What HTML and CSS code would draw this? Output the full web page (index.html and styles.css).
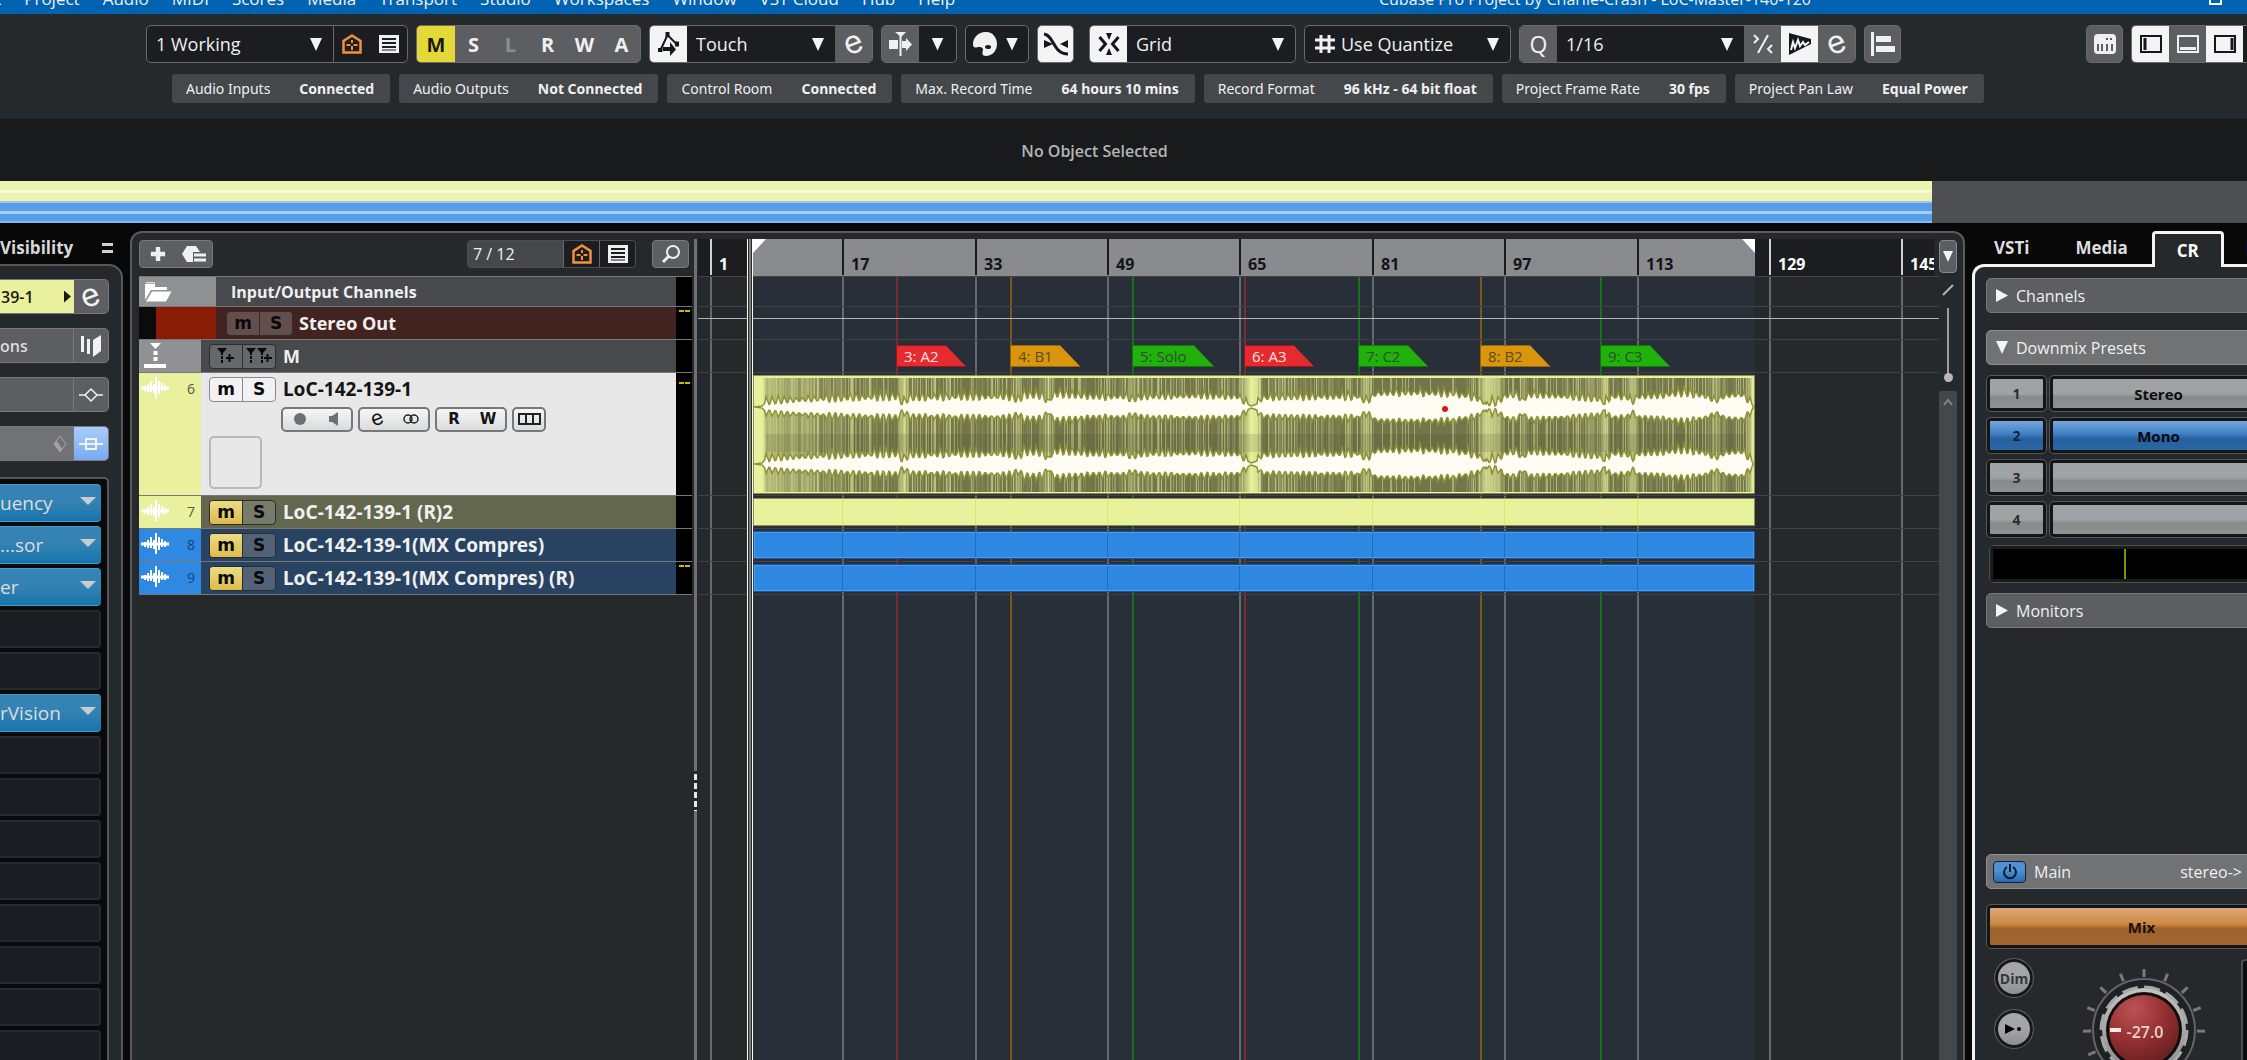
FILE: index.html
```html
<!DOCTYPE html>
<html lang="en">
<head>
    <meta charset="utf-8">
    <title>Cubase Pro Project by Charlie-Crash - LoC-Master-140-120</title>
    <link rel="stylesheet" href="styles.css">
</head>
<body>
    <!-- shared icons -->
    <svg class="defs" aria-hidden="true">
        <symbol id="i-home" viewBox="0 0 20 20"><path d="M1.500 18.500V7L10 1.500 18.500 7v11.500z" fill="none" stroke="currentColor" stroke-width="2.500"/><path d="M10 6v3M10 12v4M4.500 11h4M11.500 11h4" stroke="currentColor" stroke-width="2"/></symbol>
        <symbol id="i-list" viewBox="0 0 20 20"><path fill="currentColor" fill-rule="evenodd" d="M0 1h20v18H0zM3 4v2h14V4zM3 8v2h14V8zM3 12v2h14v-2zM3 15.500v1h14v-1z"/></symbol>
        <symbol id="i-wave" viewBox="0 0 28 22"><path fill="none" stroke="currentColor" stroke-width="2" d="M1 10v2M4 9v5M7 7v8M10 4v11M13 7v9M15 0v21M18 4v13M21 6v8M24 8v6M27 10v2"/><path d="M0 11h28" stroke="currentColor" stroke-width="3"/></symbol>
        <symbol id="i-auto" viewBox="0 0 22 24"><path d="M2.500 18L9.500 3l9 9" fill="none" stroke="currentColor" stroke-width="2"/><path fill="currentColor" d="M7.500 0h4v5h-4zM0 16h4.500v4H0zM17 9.500h4v5h-4zM5 15h7v-5l6 7.500-6 6.500v-5H5z"/></symbol>
        <symbol id="i-folder" viewBox="0 0 28 20"><path fill="currentColor" d="M1 2h10v3h12v3H7L1 18z"/><path fill="currentColor" d="M8 9.500h19.500L22 19.500H2z"/><path d="M2 .8h9" stroke="currentColor"/></symbol>
    </svg>

    <header class="titlebar">
        <nav class="menu">
            <button>Edit</button>
            <button>Project</button>
            <button>Audio</button>
            <button>MIDI</button>
            <button>Scores</button>
            <button>Media</button>
            <button>Transport</button>
            <button>Studio</button>
            <button>Workspaces</button>
            <button>Window</button>
            <button>VST Cloud</button>
            <button>Hub</button>
            <button>Help</button>
        </nav>
        <span class="title">Cubase Pro Project by Charlie-Crash - LoC-Master-140-120</span>
        <button class="restore" aria-label="Restore window"></button>
    </header>

    <div class="toolbar">
        <div class="group">
            <label class="pick working"><select aria-label="Workspace"><option>1 Working</option></select></label>
            <button class="cell edge orange" aria-label="Home"><svg width="20" height="20"><use href="#i-home"/></svg></button>
            <button class="cell" aria-label="List"><svg width="20" height="20"><use href="#i-list"/></svg></button>
        </div>
        <div class="group letters">
            <button class="cell mute">M</button>
            <button class="cell">S</button>
            <button class="cell dim">L</button>
            <button class="cell">R</button>
            <button class="cell">W</button>
            <button class="cell">A</button>
        </div>
        <div class="group">
            <button class="cell on" aria-label="Automation"><svg width="22" height="24"><use href="#i-auto"/></svg></button>
            <label class="pick touch"><select aria-label="Automation mode"><option>Touch</option></select></label>
            <button class="cell gray" aria-label="Automation panel"><span class="e">e</span></button>
        </div>
        <div class="group">
            <button class="cell gray" aria-label="Auto-scroll"><svg width="26" height="26" viewBox="0 0 26 26"><path fill="currentColor" d="M1 9h9v9H1zM14 10h4V7l6 6.500-6 6.500v-3h-4zM7 1h11l-5 5z"/><path d="M12.500 3v22" stroke="currentColor" stroke-width="2"/></svg></button>
            <button class="cell small-arrow" aria-label="Auto-scroll options"></button>
        </div>
        <div class="group">
            <button class="cell" aria-label="Colorize"><svg width="26" height="26" viewBox="0 0 26 26"><path fill="currentColor" fill-rule="evenodd" d="M13 1C20 0 25 6 25 13c0 7-5 12-11 12-4 0-4-3-3-6 0-3-2-3-5-3-3 1-5 1-5-3C1 6 7 1 13 1zM16 14a3 2 0 1 0 .1 4 3 2 0 1 0-.1-4z"/></svg></button>
            <button class="cell small-arrow narrow" aria-label="Color options"></button>
        </div>
        <button class="single on" aria-label="Snap to zero crossing"><svg width="26" height="24" viewBox="0 0 26 24"><path d="M1 2c10 1 9 20 24 20" fill="none" stroke="currentColor" stroke-width="3"/><path fill="currentColor" d="M1 8l9 4-9 4zM25 8l-8 4 8 4z"/></svg></button>
        <div class="group snap">
            <button class="cell on" aria-label="Snap"><svg width="22" height="24" viewBox="0 0 22 24"><path d="M1.500 5l6 7-6 7M20.500 5l-6 7 6 7" fill="none" stroke="currentColor" stroke-width="3"/><path fill="currentColor" d="M8 1h6l-3 7zM8 23h6l-3-7z"/></svg></button>
            <label class="pick grid"><select aria-label="Snap type"><option>Grid</option></select></label>
        </div>
        <div class="group">
            <span class="cell hash"><svg width="20" height="18" viewBox="0 0 20 18"><path d="M6 0v18M14 0v18M0 5h20M0 13h20" stroke="currentColor" stroke-width="3"/></svg></span>
            <label class="pick quantize"><select aria-label="Grid type"><option>Use Quantize</option></select></label>
        </div>
        <div class="group">
            <button class="cell gray q">Q</button>
            <label class="pick sixteenth"><select aria-label="Quantize preset"><option>1/16</option></select></label>
            <button class="cell gray" aria-label="Iterative quantize"><svg width="20" height="22" viewBox="0 0 20 22"><path d="M1 2l4 4-4 4M19 12l-4 4 4 4M15 2L5 20" fill="none" stroke="currentColor" stroke-width="2"/></svg></button>
            <button class="cell on" aria-label="Audio warp quantize"><svg width="24" height="22" viewBox="0 0 24 22"><path fill="currentColor" d="M1 0l22 6v5L1 22z"/><path d="M3 17l2-8 2 6 3-8 2 6 3-4 2 3 4-3" fill="none" stroke="#f4f4f4" stroke-width="2"/></svg></button>
            <button class="cell gray" aria-label="Quantize panel"><span class="e">e</span></button>
        </div>
        <button class="single gray" aria-label="Align"><svg width="24" height="24" viewBox="0 0 24 24"><path d="M1.500 0v24" stroke="currentColor" stroke-width="3"/><path fill="currentColor" d="M5 4h15v6H5zM5 14h19v6H5z"/></svg></button>

        <button class="single gray to-right" aria-label="Set up toolbar"><svg width="22" height="20" viewBox="0 0 22 20"><rect width="22" height="20" rx="4" fill="currentColor"/><path d="M4 10v7M8 10v7M13 10v7M18 10v7" stroke="#5d5e61" stroke-width="2"/><path d="M12 5h2M16 5h2" stroke="#5d5e61" stroke-width="2"/></svg></button>
        <div class="group zones">
            <button class="cell on" aria-label="Left zone"><svg width="22" height="18" viewBox="0 0 22 18"><rect x="1" y="1" width="20" height="16" fill="none" stroke="currentColor" stroke-width="2"/><path d="M5 3v12" stroke="currentColor" stroke-width="3"/></svg></button>
            <button class="cell gray" aria-label="Lower zone"><svg width="22" height="18" viewBox="0 0 22 18"><rect x="1" y="1" width="20" height="16" fill="none" stroke="currentColor" stroke-width="2"/><path d="M3 13.500h16" stroke="currentColor" stroke-width="3"/></svg></button>
            <button class="cell on" aria-label="Right zone"><svg width="22" height="18" viewBox="0 0 22 18"><rect x="1" y="1" width="20" height="16" fill="none" stroke="currentColor" stroke-width="2"/><path d="M18 3v12" stroke="currentColor" stroke-width="3"/></svg></button>
        </div>
    </div>

    <div class="status">
        <div class="stat">Audio Inputs <b>Connected</b></div>
        <div class="stat">Audio Outputs <b>Not Connected</b></div>
        <div class="stat">Control Room <b>Connected</b></div>
        <div class="stat">Max. Record Time <b>64 hours 10 mins</b></div>
        <div class="stat">Record Format <b>96 kHz - 64 bit float</b></div>
        <div class="stat">Project Frame Rate <b>30 fps</b></div>
        <div class="stat">Project Pan Law <b>Equal Power</b></div>
    </div>

    <div class="info">No Object Selected</div>
    <div class="overview"><div class="overview-used"></div></div>

    <main class="workspace">
        <aside class="left">
            <div class="left-tabs"><span>Visibility</span><i class="bars"></i></div>
            <div class="left-panel">
                <div class="insp yellow"><span class="channel">39-1</span><i class="tri-right"></i><button class="insp-btn" aria-label="Edit channel"><span class="e">e</span></button></div>
                <div class="insp"><span>ons</span><button class="insp-btn" aria-label="Expression"><svg width="20" height="22" viewBox="0 0 20 22"><path d="M1.500 1v16M7.500 4v15" stroke="currentColor" stroke-width="3"/><path fill="currentColor" d="M12 5l8-5v16l-8 6z"/></svg></button></div>
                <div class="insp"><button class="insp-btn" aria-label="Equalizer"><svg width="24" height="16" viewBox="0 0 24 16"><path d="M0 8h6M18 8h6M6 8l6-6 6 6-6 6z" fill="none" stroke="currentColor" stroke-width="1.500"/></svg></button></div>
                <div class="insp lit"><svg width="14" height="18" viewBox="0 0 14 18"><path d="M7 1l6 8-6 8-6-8z" fill="none" stroke="#a3a4a6" stroke-width="1"/><path d="M1 9l3-3 5 8-2 3z" fill="#a3a4a6"/></svg><button class="insp-btn" aria-label="Inserts"><svg width="24" height="14" viewBox="0 0 24 14"><path d="M0 7h24M7 2h10v10H7z" fill="none" stroke="currentColor" stroke-width="2"/></svg></button></div>
                <div class="rack">
                    <button class="slot used">uency</button>
                    <button class="slot used">...sor</button>
                    <button class="slot used">er</button>
                    <button class="slot" aria-label="Insert 4"></button>
                    <button class="slot" aria-label="Insert 5"></button>
                    <button class="slot used">rVision</button>
                    <button class="slot" aria-label="Insert 7"></button>
                    <button class="slot" aria-label="Insert 8"></button>
                    <button class="slot" aria-label="Insert 9"></button>
                    <button class="slot" aria-label="Insert 10"></button>
                    <button class="slot" aria-label="Insert 11"></button>
                    <button class="slot" aria-label="Insert 12"></button>
                    <button class="slot" aria-label="Insert 13"></button>
                    <button class="slot" aria-label="Insert 14"></button>
                </div>
            </div>
        </aside>

        <section class="arrange">
            <div class="tracks">
                <div class="tracks-head">
                    <div class="add">
                        <button aria-label="Add track"><svg width="16" height="16" viewBox="0 0 18 18"><path d="M9 1v16M1 9h16" stroke="currentColor" stroke-width="5"/></svg></button>
                        <button aria-label="Use track preset"><svg width="24" height="18" viewBox="0 0 24 18"><path fill="currentColor" d="M5 1h9l4 6h-7v10H5L0 9z"/><path d="M12 10h12M12 15h12" stroke="currentColor" stroke-width="3"/></svg></button>
                    </div>
                    <div class="count"><span>7 / 12</span>
                        <button class="orange" aria-label="Visible tracks"><svg width="22" height="20"><use href="#i-home"/></svg></button>
                        <button aria-label="Track list"><svg width="20" height="20"><use href="#i-list"/></svg></button>
                    </div>
                    <button class="find" aria-label="Find tracks"><svg width="20" height="20" viewBox="0 0 20 20"><circle cx="12" cy="8" r="6" fill="none" stroke="currentColor" stroke-width="2"/><path d="M8 12l-6 6" stroke="currentColor" stroke-width="3"/></svg></button>
                </div>
                <div class="track folder">
                    <div class="tag wide"><svg width="28" height="20"><use href="#i-folder"/></svg></div>
                    <div class="track-body">Input/Output Channels</div>
                    <div class="meter"></div>
                </div>
                <div class="track out">
                    <div class="tag wide"></div>
                    <div class="track-body"><div class="ms"><button>m</button><button>S</button></div><span class="name">Stereo Out</span></div>
                    <div class="meter"><i></i><i></i></div>
                </div>
                <div class="track marker-track">
                    <div class="tag"><svg width="22" height="26" viewBox="0 0 22 26"><path fill="currentColor" d="M6 0h11l-5.500 6zM0 21h22v4H0zM9.500 8h4v4h-4zM9.500 14h4v4h-4z"/></svg></div>
                    <div class="track-body">
                        <div class="ms icons">
                            <button aria-label="Add marker"><svg width="18" height="16" viewBox="0 0 18 16"><path fill="currentColor" d="M0 0h10L6 5H4z"/><path d="M5 4v11" stroke="currentColor" stroke-width="2" stroke-dasharray="3 1"/><path d="M12.500 6v8M9 10h8" stroke="currentColor" stroke-width="2"/></svg></button>
                            <button aria-label="Add cycle marker"><svg width="26" height="16" viewBox="0 0 26 16"><path fill="currentColor" d="M0 0h10L6 5H4zM11 0h10l-4 5h-2z"/><path d="M5 4v11M16 4v11" stroke="currentColor" stroke-width="2" stroke-dasharray="3 1"/><path d="M21.500 6v8M18 10h8" stroke="currentColor" stroke-width="2"/></svg></button>
                        </div>
                        <span class="name">M</span>
                    </div>
                    <div class="meter"></div>
                </div>
                <div class="track selected yellow-track">
                    <div class="tag"><svg width="28" height="22"><use href="#i-wave"/></svg><span>6</span></div>
                    <div class="track-body">
                        <div class="line"><div class="ms"><button>m</button><button>S</button></div><span class="name audio-name">LoC-142-139-1</span></div>
                        <div class="line controls">
                            <div class="pair"><button aria-label="Record enable"><svg width="12" height="12"><circle cx="6" cy="6" r="6" fill="#6f7072"/></svg></button><button aria-label="Monitor"><svg width="10" height="14"><path d="M0 4h3l6-4v14l-6-4H0z" fill="#6f7072"/></svg></button></div>
                            <div class="pair"><button aria-label="Edit channel settings"><span class="e small">e</span></button><button aria-label="Stereo"><svg width="16" height="10" viewBox="0 0 16 10"><circle cx="5" cy="5" r="4" fill="none" stroke="#222" stroke-width="1.500"/><circle cx="11" cy="5" r="4" fill="none" stroke="#222" stroke-width="1.500"/></svg></button></div>
                            <div class="pair"><button>R</button><button>W</button></div>
                            <div class="pair one"><button aria-label="Lanes"><svg width="23" height="12" viewBox="0 0 23 12"><path d="M1 1h21v10H1zM8 1v10M15 1v10" fill="none" stroke="#222" stroke-width="2"/></svg></button></div>
                        </div>
                        <div class="picture"></div>
                    </div>
                    <div class="meter"><i></i><i></i></div>
                </div>
                <div class="track olive yellow-track">
                    <div class="tag"><svg width="28" height="22"><use href="#i-wave"/></svg><span>7</span></div>
                    <div class="track-body"><div class="ms muted"><button>m</button><button>S</button></div><span class="name audio-name">LoC-142-139-1 (R)2</span></div>
                    <div class="meter"></div>
                </div>
                <div class="track blue-track">
                    <div class="tag"><svg width="28" height="22"><use href="#i-wave"/></svg><span>8</span></div>
                    <div class="track-body"><div class="ms muted"><button>m</button><button>S</button></div><span class="name audio-name">LoC-142-139-1(MX Compres)</span></div>
                    <div class="meter"></div>
                </div>
                <div class="track blue-track">
                    <div class="tag"><svg width="28" height="22"><use href="#i-wave"/></svg><span>9</span></div>
                    <div class="track-body"><div class="ms muted"><button>m</button><button>S</button></div><span class="name audio-name">LoC-142-139-1(MX Compres) (R)</span></div>
                    <div class="meter"><i></i><i></i></div>
                </div>
                <div class="tracks-end"></div>
            </div>

            <div class="splitter"><i></i></div>

            <div class="timeline" id="timeline">
                <div class="ruler" id="ruler"><div class="ruler-cycle"></div></div>
                <div class="lanes" id="lanes">
                    <div class="cycle"></div>
                    <div class="lane short"></div>
                    <div class="lane automation"></div>
                    <div class="lane" id="marker-lane"></div>
                    <div class="lane tall"><div class="clip audio"><canvas id="wave" width="1000" height="114"></canvas></div></div>
                    <div class="lane"><div class="clip yellow-clip"></div></div>
                    <div class="lane"><div class="clip blue-clip"></div></div>
                    <div class="lane"><div class="clip blue-clip"></div></div>
                    <div class="lane-end"></div>
                </div>
                <div class="playhead"></div>
            </div>

            <div class="scroller">
                <button class="ruler-menu" aria-label="Ruler menu"></button>
                <svg width="12" height="12" viewBox="0 0 12 12"><path d="M1 11L11 1" stroke="#b5b5b5" stroke-width="2"/></svg>
                <input class="zoom" type="range" min="0" max="100" value="100" aria-label="Waveform zoom">
                <div class="bar"><svg width="10" height="8" viewBox="0 0 10 8"><path d="M1 7l4-5 4 5" fill="none" stroke="#85878a" stroke-width="2"/></svg></div>
            </div>
        </section>

        <aside class="right">
            <div class="tabs">
                <button>VSTi</button>
                <button>Media</button>
                <button class="active">CR</button>
                <button>Meter</button>
            </div>
            <div class="right-panel">
                <button class="section"><i class="tri-right"></i>Channels</button>
                <button class="section open"><i class="tri-down"></i>Downmix Presets</button>
                <div class="presets">
                    <button>1</button><button class="preset">Stereo</button>
                    <button class="blue">2</button><button class="preset blue">Mono</button>
                    <button>3</button><button class="preset" aria-label="Preset 3"></button>
                    <button>4</button><button class="preset" aria-label="Preset 4"></button>
                </div>
                <div class="phase"><i></i></div>
                <button class="section"><i class="tri-right"></i>Monitors</button>

                <div class="section open main-out">
                    <button class="power" aria-label="Power"><svg width="16" height="16" viewBox="0 0 16 16"><path d="M5 3a6 6 0 1 0 6 0M8 0v8" fill="none" stroke="#0c1c30" stroke-width="2"/></svg></button>
                    <span>Main</span><span class="route">stereo-&gt;</span>
                </div>
                <button class="mix">Mix</button>
                <div class="level">
                    <div class="round-col">
                        <button class="round">Dim</button>
                        <button class="round" aria-label="Talk"><svg width="18" height="10" viewBox="0 0 18 10"><path d="M0 0l10 5-10 5z"/><circle cx="14" cy="5" r="2"/></svg></button>
                        <button class="round" aria-label="Listen"></button>
                    </div>
                    <svg class="knob" width="124" height="124" viewBox="-62 -62 124 124">
                        <defs>
                            <radialGradient id="red" cx=".35" cy=".2" r=".9"><stop offset="0" stop-color="#b95355"/><stop offset=".5" stop-color="#963031"/><stop offset="1" stop-color="#5f1c1e"/></radialGradient>
                            <linearGradient id="rim" x1="0" y1="0" x2="0" y2="1"><stop offset="0" stop-color="#c4c4c4"/><stop offset="1" stop-color="#8a8a8a"/></linearGradient>
                        </defs>
                        <g id="ticks"></g>
                        <circle r="51" fill="#1f2224" stroke="#626466" stroke-width="2"/>
                        <circle r="42" fill="url(#rim)"/>
                        <circle r="43" fill="none" stroke="#a9a9a9" stroke-width="3" stroke-dasharray="16 6.500"/>
                        <circle r="38" fill="#0d0d0e"/>
                        <circle r="35" fill="url(#red)"/>
                        <rect x="-34" y="-2" width="11" height="4" fill="#eee"/>
                        <text x="1" y="8" text-anchor="middle">-27.0</text>
                    </svg>
                    <div class="level-meter"></div>
                </div>
            </div>
        </aside>
    </main>
    <script src="script.js"></script>
</body>
</html>
```
FILE: styles.css
```css
* {
    box-sizing: border-box;
}

body {
    margin: 0;
    height: 100vh;
    overflow: hidden;
    display: flex;
    flex-direction: column;
    background: #080808;
    color: #f0f0f0;
    font-family: "Open Sans", "Noto Sans", sans-serif;
    font-size: 16px;
}

button, select, input {
    font: inherit;
    color: inherit;
    border: 0;
    padding: 0;
    margin: 0;
    background: none;
}

svg {
    display: block;
    flex: none;
}

.defs {
    position: absolute;
    width: 0;
    height: 0;
}

/* title bar */
.titlebar {
    height: 14px;
    flex: none;
    display: flex;
    align-items: flex-end;
    padding: 0 25px 3px 0;
    overflow: hidden;
    background: #0063b1;
    line-height: 24px;
    white-space: nowrap;
}

.menu {
    display: flex;
    gap: 23px;
    margin-left: -29px;
    font-size: 17px;
}

.title {
    margin-left: auto;
    margin-right: 398px;
}

.restore {
    width: 13px;
    height: 12px;
    margin-bottom: 6px;
    border: 2px solid #fff;
}

/* toolbar */
.toolbar {
    flex: none;
    display: flex;
    gap: 8px;
    padding: 11px 0 0 146px;
    background: #25292c;
}

.group, .single {
    display: flex;
    height: 38px;
    flex: none;
    border: 1px solid #696a6d;
    border-radius: 5px;
    background: #1c1d20;
    overflow: hidden;
}

.cell, .single {
    width: 37px;
    flex: none;
    display: flex;
    align-items: center;
    justify-content: center;
    color: #f0f0f0;
}

.edge {
    border-left: 1px solid #696a6d;
}

.cell.orange, .orange {
    color: #f0923a;
}

.single.gray, .gray {
    background: #5d5e61;
}

.single.on, .cell.on {
    background: #f4f4f4;
    color: #16171a;
}

.letters {
    background: #5d5e61;
    font-size: 20px;
    font-weight: 700;
}

.letters .mute {
    width: 38px;
    background: #e5d839;
    color: #1a1a10;
}

.letters .dim {
    color: #8b8c8f;
}

/* slanted "edit" letter */
.e {
    font-family: Inter, sans-serif;
    font-weight: 400;
    font-size: 32px;
    line-height: 24px;
    height: 28px;
    transform: rotate(-20deg);
}

.e.small {
    font-size: 21px;
    line-height: 18px;
    height: 20px;
}

.pick {
    position: relative;
    display: block;
}

.pick select {
    width: 100%;
    height: 36px;
    padding: 0 30px 0 9px;
    appearance: none;
    font-size: 18px;
}

.pick::after, .small-arrow::after, .ruler-menu::after {
    content: "";
    width: 12px;
    height: 13px;
    background: #f4f4f4;
    clip-path: polygon(0 0, 100% 0, 50% 100%);
}

.pick::after {
    position: absolute;
    right: 11px;
    top: 12px;
    pointer-events: none;
}

.working { width: 186px; }
.touch { width: 148px; }
.grid { width: 168px; }
.quantize { width: 171px; }
.sixteenth { width: 187px; }

.quantize select {
    padding-left: 2px;
}

.hash {
    width: 34px;
    justify-content: flex-end;
    padding-right: 4px;
}

.narrow {
    width: 25px;
    justify-content: flex-start;
    padding-left: 3px;
}

.snap {
    margin-left: 7px;
}

.q {
    font-size: 23px;
}

.to-right {
    margin-left: auto;
}

.zones {
    width: 116px;
    border-right: 0;
    border-radius: 5px 0 0 5px;
}

/* status line */
.status {
    flex: none;
    display: flex;
    gap: 9px;
    padding: 11px 0 16px 172px;
    background: #25292c;
}

.stat {
    height: 29px;
    padding: 0 16px 0 14px;
    display: flex;
    gap: 29px;
    border-radius: 3px;
    background: #44484b;
    font-family: "Noto Sans", sans-serif;
    font-size: 14px;
    line-height: 29px;
    white-space: nowrap;
}

.stat b {
    font-weight: 700;
}

.info {
    flex: none;
    height: 62px;
    line-height: 64px;
    padding-right: 58px;
    background: #191a1c;
    color: #b4b5b7;
    font-weight: 600;
    text-align: center;
}

.overview {
    flex: none;
    height: 42px;
    background: #4e4f53;
}

.overview-used {
    width: 86%;
    height: 42px;
    background: linear-gradient(#ecf3af 9px, #f6f8d8 9px 12px, #ecf3af 12px 20px, #9fc5ee 20px 22px, #559ee9 22px 30px, #a9cdf4 30px 33px, #559ee9 33px 40px, #86b9ee 40px);
}

.workspace {
    flex: 1;
    min-height: 0;
    display: grid;
    grid-template-columns: 123px 1fr 275px;
    gap: 7px;
    padding-top: 8px;
}

/* inspector */
.left, .right {
    display: flex;
    flex-direction: column;
    min-height: 0;
    overflow: hidden;
}

.left-tabs {
    height: 33px;
    flex: none;
    display: flex;
    align-items: center;
    justify-content: flex-end;
    gap: 29px;
    padding-right: 10px;
    font-size: 17px;
    font-weight: 700;
    color: #d8d8d8;
}

.bars {
    width: 12px;
    height: 10px;
    border-top: 3px solid #d0d0d0;
    border-bottom: 3px solid #d0d0d0;
}

.left-panel {
    flex: 1;
    min-height: 0;
    padding: 13px 12px 0 0;
    border: 2px solid #55585b;
    border-width: 2px 2px 0 0;
    border-radius: 0 14px 0 0;
    background: #25292c;
    overflow: hidden;
}

.insp {
    height: 35px;
    margin-bottom: 14px;
    display: flex;
    align-items: center;
    border: 1px solid #77787b;
    border-left: 0;
    border-radius: 0 5px 5px 0;
    background: #5d5e61;
    overflow: hidden;
    font-weight: 600;
    color: #dcdcdc;
}

.insp.yellow {
    background: linear-gradient(90deg, #e9f19e 74px, #5d5e61 74px);
    color: #1b1b12;
}

.channel {
    padding-left: 1px;
    width: 64px;
}

.insp.lit {
    background: #717274;
}

.insp.lit > svg {
    margin-left: 53px;
}

.insp-btn {
    width: 35px;
    height: 33px;
    margin-left: auto;
    display: flex;
    align-items: center;
    justify-content: center;
    border-left: 1px solid #77787b;
    color: #f2f2f2;
}

.yellow .insp-btn {
    border-left: 0;
}

.lit .insp-btn {
    background: linear-gradient(#a9cdfb, #78aaf0);
}

.tri-right {
    width: 7px;
    height: 12px;
    background: currentColor;
    clip-path: polygon(0 0, 100% 50%, 0 100%);
}

.rack {
    height: 700px;
    margin: 16px 0 0;
    padding: 5px 6px 0 0;
    border: 2px solid #55585b;
    border-width: 2px 2px 0 0;
    border-radius: 0 5px 0 0;
    background: #080a0b;
    display: flex;
    flex-direction: column;
    gap: 4px;
}

.slot {
    position: relative;
    height: 38px;
    flex: none;
    border: 2px solid #262a30;
    border-left: 0;
    border-radius: 0 4px 4px 0;
    background: #1a1d21;
    text-align: left;
    font-size: 19px;
    color: #dcdcdc;
}

.slot.used {
    border: 0;
    border-top: 1px solid #459bcc;
    border-bottom: 1px solid #459bcc;
    background: linear-gradient(#3583b4 45%, #1674ac);
}

.slot.used::after {
    content: "";
    position: absolute;
    right: 5px;
    top: 12px;
    width: 16px;
    height: 8px;
    background: #c9cdd0;
    clip-path: polygon(0 0, 100% 0, 50% 100%);
}

/* arrange window */
.arrange {
    min-width: 0;
    min-height: 0;
    display: flex;
    padding: 6px 6px 0 7px;
    border: 2px solid #5a5b5e;
    border-bottom: 0;
    border-radius: 12px 12px 0 0;
    background: #25292c;
}

.tracks {
    width: 553px;
    flex: none;
    overflow: hidden;
}

.tracks-head {
    height: 37px;
    display: flex;
    align-items: flex-start;
    padding-top: 1px;
}

.tracks-head button {
    display: flex;
    align-items: center;
    justify-content: center;
    height: 26px;
    width: 36px;
}

.add, .find {
    display: flex;
    border: 1px solid #77787b;
    border-radius: 4px;
    background: #5d5e61;
}

.tracks-head .find {
    width: 37px;
    height: 28px;
    margin: 0 3px 0 16px;
    border: 1px solid #77787b;
    background: #5d5e61;
}

.count {
    margin-left: auto;
    display: flex;
    width: 169px;
    border: 1px solid #4b4e51;
    border-radius: 4px;
    background: #44484b;
    overflow: hidden;
    font-size: 16px;
    line-height: 26px;
}

.count span {
    flex: 1;
    padding-left: 5px;
}

.count button {
    background: #1c1d20;
    border-left: 1px solid #696a6d;
}

.track {
    height: 33px;
    display: flex;
    border-top: 1px solid #77787b;
    background: #48494c;
}

.tag {
    width: 62px;
    flex: none;
    display: flex;
    align-items: flex-start;
    justify-content: space-between;
    padding: 4px 6px 0 2px;
    background: #909193;
    color: #fff;
}

.tag.wide {
    width: 77px;
    padding: 5px 0 0 5px;
}

.marker-track .tag {
    padding: 3px 0 0 5px;
}

.tag span {
    font-size: 14px;
    line-height: 24px;
    color: #55584a;
}

.blue-track .tag span {
    color: #1c4270;
}

.track-body {
    flex: 1;
    min-width: 0;
    display: flex;
    align-items: center;
    gap: 7px;
    padding-left: 8px;
    font-weight: 700;
    white-space: nowrap;
}

.name {
    font-size: 18px;
}

.audio-name {
    font-family: "Noto Sans", sans-serif;
    font-size: 19px;
}

.meter {
    width: 16px;
    flex: none;
    display: flex;
    gap: 1px;
    padding: 3px 0 0 3px;
    background: #000;
}

.meter i {
    width: 5px;
    height: 2px;
    background: #c9be00;
}

.folder {
    height: 30px;
}

.folder .track-body {
    padding-left: 15px;
}

.out {
    background: #43231f;
}

.out .tag {
    background: linear-gradient(90deg, #0b0b0b 17px, #8a1c05 17px);
}

.out .track-body {
    padding-left: 10px;
    gap: 6px;
}

.yellow-track .tag {
    background: #e9f19e;
}

.olive {
    background: #62674d;
}

.blue-track {
    background: #284361;
}

.blue-track .tag {
    background: #2f89e3;
}

.ms {
    display: flex;
    width: 67px;
    height: 25px;
    flex: none;
    border: 1px solid #2c2d2f;
    border-radius: 4px;
    background: rgba(160, 160, 160, .35);
    overflow: hidden;
}

.ms button {
    flex: 1;
    display: flex;
    align-items: center;
    justify-content: center;
    font: 700 17px/21px "DejaVu Sans", sans-serif;
    color: #0a0a0a;
}

.ms button + button {
    border-left: 1px solid #2c2d2f;
}

.ms.muted button:first-child {
    background: linear-gradient(#eddc85, #dcbb4c);
}

.selected {
    height: 123px;
    background: #e8e8e8;
}

.selected .track-body {
    flex-direction: column;
    align-items: flex-start;
    gap: 4px;
    padding-top: 3px;
}

.selected .name {
    color: #141414;
}

.selected .ms {
    border-color: #8a8a8a;
    background: #f2f2f2;
}

.selected .ms button + button {
    border-color: #8a8a8a;
}

.selected .meter {
    padding-top: 9px;
}

.line {
    display: flex;
    align-items: center;
    gap: 7px;
    height: 26px;
}

.controls {
    gap: 5px;
    padding-left: 72px;
}

.pair {
    width: 72px;
    height: 25px;
    display: flex;
    border: 2px solid #77787b;
    border-radius: 5px;
    background: linear-gradient(#f6f6f6, #dadbdd);
}

.pair.one {
    width: 34px;
}

.pair button {
    flex: 1;
    display: flex;
    align-items: center;
    justify-content: center;
    font: 700 15px/20px "DejaVu Sans", sans-serif;
    color: #141414;
}

.picture {
    width: 53px;
    height: 53px;
    flex: none;
    border: 2px solid #b8b8b8;
    border-radius: 5px;
}

.tracks-end {
    border-top: 1px solid #77787b;
}

.splitter {
    width: 3px;
    flex: none;
    margin: 0 1px 0 2px;
    background: #6f7073;
    position: relative;
}

.splitter i {
    position: absolute;
    left: 0;
    top: 532px;
    width: 3px;
    height: 40px;
    background: repeating-linear-gradient(#25292c 0 3px, #e8e8e8 3px 9px);
}

/* timeline */
.timeline {
    position: relative;
    flex: 1;
    min-width: 0;
    display: flex;
    flex-direction: column;
    overflow: hidden;
}

.ruler {
    position: relative;
    height: 38px;
    flex: none;
    margin-right: 5px;
    overflow: hidden;
    background: #1c1d20;
    font-weight: 700;
    line-height: 20px;
}

.ruler-cycle {
    position: absolute;
    left: 55px;
    top: 0;
    width: 1002px;
    height: 38px;
    background: #8a8b8e;
}

.ruler-cycle::before, .ruler-cycle::after {
    content: "";
    position: absolute;
    top: 0;
    left: 0;
    width: 13px;
    height: 14px;
    background: #fff;
    clip-path: polygon(0 0, 100% 0, 0 100%);
}

.ruler-cycle::after {
    left: auto;
    right: 0;
    clip-path: polygon(0 0, 100% 0, 100% 100%);
}

.tick {
    position: absolute;
    top: 0;
    height: 36px;
    padding: 15px 0 0 7px;
    border-left: 2px solid #d0d0d0;
    color: #fff;
}

.tick.inside {
    border-color: #1a1a1c;
    color: #131418;
}

.lanes {
    position: relative;
    flex: 1;
    margin-top: -1px;
}

.cycle {
    position: absolute;
    left: 55px;
    top: 1px;
    bottom: 0;
    width: 1002px;
    background: #282f39;
}

.grid-line, .marker-line {
    position: absolute;
    top: 1px;
    bottom: 0;
    width: 2px;
    background: #66696e;
}

.lane {
    position: relative;
    height: 33px;
    border-top: 1px solid #3f4247;
}

.lane.short { height: 30px; }
.lane.tall { height: 123px; }

.lane-end {
    position: relative;
    border-top: 1px solid #3f4247;
}

.automation::after {
    content: "";
    position: absolute;
    left: 0;
    right: 0;
    top: 11px;
    height: 1px;
    background: #a9b8c2;
}

.flag {
    position: absolute;
    top: 5px;
    height: 22px;
    padding: 0 27px 0 7px;
    border: 1px solid #11790a;
    background: #20b20b;
    clip-path: polygon(0 0, calc(100% - 21px) 0, 100% 100%, 0 100%);
    font-size: 15px;
    line-height: 21px;
    color: #2c4d28;
    white-space: nowrap;
}

.flag.red {
    border-color: #a3121c;
    background: #e62b2f;
    color: #ffe3e3;
}

.flag.amber {
    border-color: #97650a;
    background: #d9960c;
    color: #5c4a22;
}

.clip {
    position: absolute;
    left: 55px;
    top: 2px;
    width: 1002px;
    height: 28px;
    border: 1px solid #8b8f4c;
    background: #e8f19c;
}

.audio {
    height: 119px;
}

.audio canvas {
    display: block;
    margin-top: 2px;
}

.blue-clip {
    border-color: #17549a;
    box-shadow: inset 0 0 0 1px #4a9bf0;
    background: #2e88e2;
}

.clip-line {
    position: absolute;
    top: 1px;
    bottom: 1px;
    width: 1px;
    background: #dbe667;
}

.blue-clip .clip-line {
    background: #1f6cbc;
}

.playhead {
    position: absolute;
    left: 49px;
    top: 0;
    bottom: 0;
    width: 6px;
    border-left: 1px solid #fff;
    border-right: 1px solid #fff;
    background: linear-gradient(90deg, #2b2b2c 1px, #827e7a 1px 3px, #2b2b2c 3px);
}

.scroller {
    width: 18px;
    flex: none;
    display: flex;
    flex-direction: column;
    align-items: center;
    padding-top: 1px;
}

.ruler-menu {
    width: 18px;
    height: 33px;
    margin-bottom: 11px;
    display: flex;
    align-items: center;
    justify-content: center;
    border: 1px solid #85878a;
    border-radius: 4px;
    background: #5d5e61;
}

.ruler-menu::after {
    width: 10px;
    height: 11px;
}

.zoom {
    appearance: none;
    writing-mode: vertical-lr;
    width: 10px;
    height: 74px;
    margin: 12px 0 9px;
    background: linear-gradient(90deg, transparent 4px, #9c9da0 4px 6px, transparent 6px);
}

.zoom::-webkit-slider-thumb {
    appearance: none;
    width: 9px;
    height: 9px;
    border-radius: 50%;
    background: #b9b7b9;
}

.bar {
    flex: 1;
    width: 18px;
    padding: 7px 4px;
    border-radius: 3px 3px 0 0;
    background: #45484b;
}

/* control room */
.tabs {
    flex: none;
    height: 33px;
    display: flex;
    position: relative;
    z-index: 1;
    width: 400px;
}

.tabs button {
    padding: 0 24px 0 22px;
    font-size: 17px;
    font-weight: 700;
    color: #dedede;
}

.tabs .active {
    height: 36px;
    padding: 0 22px;
    border: 3px solid #f4f4f4;
    border-bottom: 0;
    border-radius: 4px 4px 0 0;
    background: #25292c;
    color: #fff;
}

.right-panel {
    flex: 1;
    min-height: 0;
    width: 400px;
    display: flex;
    flex-direction: column;
    align-items: flex-start;
    padding: 11px 0 0 11px;
    border: 3px solid #f4f4f4;
    border-width: 3px 0 0 3px;
    border-radius: 12px 0 0 0;
    background: #25292c;
}

.section {
    flex: none;
    width: 311px;
    height: 35px;
    display: flex;
    align-items: center;
    gap: 8px;
    padding: 0 9px;
    border: 1px solid #77787b;
    border-radius: 5px;
    background: #5d5e61;
}

.section .tri-right, .tri-down {
    width: 12px;
    height: 13px;
    background: #f4f4f4;
}

.tri-down {
    clip-path: polygon(0 0, 100% 0, 50% 100%);
}

.section.open {
    margin: 17px 0 10px;
    border-color: #8d8e90;
    background: #717274;
}

.presets {
    display: grid;
    grid-template-columns: 61px 219px;
    gap: 5px 2px;
}

.presets button, .mix {
    height: 37px;
    border: 1px solid #55585a;
    outline: 3px solid #141516;
    outline-offset: -4px;
    border-radius: 5px;
    background: linear-gradient(#a0a3a5 50%, #858a8b 60%, #909495);
    font-size: 14px;
    font-weight: 700;
    color: #2b2e2f;
}

.presets .preset {
    font-size: 15px;
    color: #0d0d0d;
}

.presets .blue {
    background: linear-gradient(#74a6dc 10%, #3f80c8 45%, #27609c 60%, #2b68a6);
    color: #10243e;
}

.presets .preset.blue {
    color: #05080d;
}

.phase {
    width: 283px;
    height: 38px;
    margin: 7px 0 10px 3px;
    padding: 3px 0 3px 134px;
    border: 1px solid #4b4e50;
    border-radius: 4px;
    outline: 3px solid #1b1c1e;
    outline-offset: -4px;
    background: #000;
}

.phase i {
    display: block;
    width: 2px;
    height: 30px;
    background: #739c00;
}

.section.main-out {
    margin: auto 0 15px;
    padding: 0 54px 0 6px;
}

.power {
    width: 33px;
    height: 22px;
    display: flex;
    align-items: center;
    justify-content: center;
    border: 1px solid #17202c;
    border-radius: 4px;
    background: linear-gradient(#4f90d6 40%, #2a6cb3);
}

.route {
    margin-left: auto;
}

.mix {
    flex: none;
    width: 311px;
    height: 45px;
    font-size: 15px;
    color: #1a0f06;
    background: linear-gradient(#ddab7e 5%, #cd8740 45%, #9d632c 55%, #a2672f);
}

.level {
    flex: none;
    height: 111px;
    width: 311px;
    display: flex;
    overflow: hidden;
}

.round-col {
    display: flex;
    flex-direction: column;
    gap: 11px;
    padding: 9px 0 0 8px;
}

.round {
    width: 40px;
    height: 40px;
    flex: none;
    display: flex;
    align-items: center;
    justify-content: center;
    border: 1px solid #5a5d5f;
    border-radius: 50%;
    outline: 3px solid #17181a;
    outline-offset: -4px;
    background: linear-gradient(#a3a6a8 50%, #868b8d);
    font-size: 14px;
    font-weight: 700;
    color: #33373a;
}

.knob {
    margin: 19px 35px 0 48px;
}

.knob text {
    font-size: 16px;
    font-weight: 600;
    fill: #e3d3d3;
}

.level-meter {
    flex: none;
    width: 60px;
    height: 150px;
    margin-top: 10px;
    border: 2px solid #4b4e50;
    border-radius: 4px;
    background: #0c0d0e;
}
```
FILE: script.js
```js
(function () {
    var ruler = document.getElementById('ruler');
    var lanes = document.getElementById('lanes');
    var markerLane = document.getElementById('marker-lane');

    var origin = 12;          // x of bar 1
    var step = 132.37;        // 16 bars
    var cycleStart = 55;
    var cycleWidth = 1002;

    var markers = [
        { name: '3: A2', x: 198, type: 'red' },
        { name: '4: B1', x: 312, type: 'amber' },
        { name: '5: Solo', x: 434, type: 'green' },
        { name: '6: A3', x: 546, type: 'red' },
        { name: '7: C2', x: 660, type: 'green' },
        { name: '8: B2', x: 782, type: 'amber' },
        { name: '9: C3', x: 902, type: 'green' }
    ];
    var lineColors = { red: '#7b2933', amber: '#7a581c', green: '#1a701c' };

    function add(parent, className, x, text, before) {
        var el = document.createElement('div');
        el.className = className;
        el.style.left = x + 'px';
        if (text) el.textContent = text;
        parent.insertBefore(el, before || null);
        return el;
    }

    var firstLane = lanes.querySelector('.lane');
    for (var i = 0; i < 10; i++) {
        var x = Math.round(origin + i * step);
        var inside = x > cycleStart && x < cycleStart + cycleWidth;
        add(ruler, inside ? 'tick inside' : 'tick', x, String(1 + i * 16));
        add(lanes, 'grid-line', x, '', firstLane);
        if (inside) {
            document.querySelectorAll('.yellow-clip, .blue-clip').forEach(function (clip) {
                add(clip, 'clip-line', x - cycleStart - 1);
            });
        }
    }

    markers.forEach(function (m) {
        add(lanes, 'marker-line', m.x, '', firstLane).style.background = lineColors[m.type];
        add(markerLane, 'flag ' + m.type, m.x, m.name);
    });

    // waveform
    var seed = 7;
    function rnd() {
        seed = (seed * 16807) % 2147483647;
        return seed / 2147483647;
    }

    // [x, half height] pairs of the loudness curve
    var curve = [[0, 0], [8, 1], [12, 5], [25, 6], [70, 8], [100, 9], [143, 10], [149, 4], [156, 9], [210, 10], [258, 10],
        [264, 6], [270, 12], [288, 11], [294, 5], [302, 13], [340, 10], [372, 10], [378, 7], [390, 10], [450, 11], [484, 10],
        [490, 5], [497, 1], [503, 3], [508, 9], [560, 10], [604, 10], [612, 5], [622, 13], [655, 14], [700, 13], [722, 9],
        [732, 3], [744, 5], [752, 11], [763, 12], [768, 6], [776, 12], [800, 11], [845, 8], [851, 3], [856, 10], [872, 10],
        [878, 5], [884, 10], [905, 11], [930, 14], [950, 11], [962, 6], [972, 11], [988, 12], [996, 5], [1000, 0]];

    function level(x) {
        for (var i = 1; i < curve.length; i++) {
            if (x <= curve[i][0]) {
                var a = curve[i - 1], b = curve[i];
                return a[1] + (b[1] - a[1]) * (x - a[0]) / (b[0] - a[0]);
            }
        }
        return 0;
    }

    var c = document.getElementById('wave').getContext('2d');
    var peaks = [];
    var swing = 3;
    for (var px = 0; px < 1000; px++) {
        var v = level(px);
        // a transient every six pixels, falling off in between
        if (px % 6 === 0) swing = 2 + rnd() * 5;
        var shape = [1, 0.5, 0, -0.5, -0.4, 0.3][px % 6];
        var hit = v > 3 ? shape * swing : 0;
        peaks.push({ up: v + hit, down: v + hit * 0.8 });
        // background stripes get darker with the level
        var dark = Math.max(0, Math.min(1, (v - 1) / 8 * (0.6 + rnd() * 0.45)));
        if (rnd() < 0.15) dark *= 0.55;
        c.fillStyle = 'rgba(88,90,56,' + (dark * 0.82) + ')';
        c.fillRect(px, 0, 1, 114);
    }
    c.fillStyle = 'rgba(70,70,45,.16)';
    c.fillRect(12, 56, 980, 18);

    [29, 86].forEach(function (mid) {
        c.beginPath();
        c.moveTo(0, mid);
        peaks.forEach(function (p, i) {
            c.lineTo(i, mid - p.up);
        });
        for (var i = 999; i >= 0; i--) {
            c.lineTo(i, mid + peaks[i].down);
        }
        c.closePath();
        c.fillStyle = '#fdfdf4';
        c.fill();
        c.strokeStyle = '#8f9136';
        c.lineWidth = 1.5;
        c.stroke();
    });
    c.fillStyle = '#e01414';
    c.beginPath();
    c.arc(691, 31, 3, 0, Math.PI * 2);
    c.fill();

    // knob scale
    var ticks = '';
    for (var a = -204; a <= 24; a += 22.8) {
        var r = a * Math.PI / 180;
        ticks += '<path d="M' + Math.cos(r) * 53 + ' ' + Math.sin(r) * 53 + 'L' + Math.cos(r) * 61 + ' ' + Math.sin(r) * 61 + '" stroke="#77797b" stroke-width="3"/>';
    }
    document.getElementById('ticks').innerHTML = ticks;
})();
```
